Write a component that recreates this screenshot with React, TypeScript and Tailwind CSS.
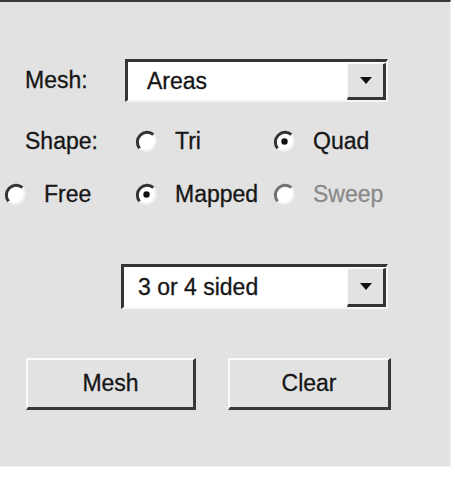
import React from "react";

const font = { fontFamily: '"Liberation Sans", Arial, sans-serif' };

function Radio({ checked, disabled }: { checked?: boolean; disabled?: boolean }) {
  return (
    <svg width="23" height="23" viewBox="0 0 23 23" className="shrink-0">
      <circle cx="11.5" cy="11.5" r="9.8" fill="#ffffff" />
      <path d="M 4.6 18.4 A 9.8 9.8 0 0 1 18.4 4.6" fill="none" stroke={disabled ? "#707070" : "#333333"} strokeWidth="3" />
      <path d="M 18.4 4.6 A 9.8 9.8 0 0 1 4.6 18.4" fill="none" stroke="#f2f2f2" strokeWidth="2" />
      {checked && <circle cx="11.5" cy="11.5" r="3.2" fill="#111" />}
    </svg>
  );
}

function RadioItem({ label, checked, disabled, width }: { label: string; checked?: boolean; disabled?: boolean; width: string }) {
  return (
    <div className={`flex items-center gap-[17px] ${width}`}>
      <Radio checked={checked} disabled={disabled} />
      <span className={disabled ? "text-[#8a8a8a]" : "text-[#161616]"}>{label}</span>
    </div>
  );
}

function Combo({ value, className, textPad }: { value: string; className: string; textPad: string }) {
  return (
    <div className={`flex bg-white border-t-[3px] border-l-[3px] border-t-[#353535] border-l-[#353535] border-r-2 border-b-2 border-r-[#f6f6f6] border-b-[#f6f6f6] ${className}`}>
      <div className={`flex-1 flex items-center text-[#161616] ${textPad}`}>{value}</div>
      <div className="w-[39px] mt-[1px] flex items-center justify-center bg-[#e2e2e2] border-t border-l border-t-[#f8f8f8] border-l-[#f8f8f8] border-r-[3px] border-b-[3px] border-r-[#353535] border-b-[#353535]">
        <svg width="12" height="7" viewBox="0 0 12 7">
          <path d="M0 0 H12 L6 7 Z" fill="#111" />
        </svg>
      </div>
    </div>
  );
}

function Button({ label, className }: { label: string; className: string }) {
  return (
    <div className={`flex items-center justify-center h-[52px] bg-[#e2e2e2] text-[#161616] border-t-2 border-l-2 border-t-[#fbfbfb] border-l-[#fbfbfb] border-r-[3px] border-b-[3px] border-r-[#383838] border-b-[#383838] ${className}`}>
      {label}
    </div>
  );
}

export default function App() {
  return (
    <div className="w-[455px] h-[485px] bg-white" style={font}>
      <div className="w-[451px] h-[467px] bg-[#e2e2e2] border-t-[2px] border-t-[#3a3a3a] border-r border-b border-r-[#f2f2f2] border-b-[#f2f2f2] text-[23px] leading-none [-webkit-text-stroke:0.3px] flex flex-col">
        <div className="mt-[57px] flex items-center h-[43px] pl-[25px]">
          <span className="w-[100px] text-[#161616]">Mesh:</span>
          <Combo value="Areas" className="w-[263px] h-[43px]" textPad="pl-[19px]" />
        </div>
        <div className="mt-[27px] flex items-center h-[24px] pl-[25px]">
          <span className="w-[110px] text-[#161616]">Shape:</span>
          <RadioItem label="Tri" width="w-[138px]" />
          <RadioItem label="Quad" checked width="w-[120px]" />
        </div>
        <div className="mt-[29px] flex items-center h-[24px] pl-[4px]">
          <RadioItem label="Free" width="w-[131px]" />
          <RadioItem label="Mapped" checked width="w-[138px]" />
          <RadioItem label="Sweep" disabled width="w-[120px]" />
        </div>
        <div className="mt-[58px] flex pl-[121px]">
          <Combo value="3 or 4 sided" className="w-[267px] h-[45px]" textPad="pl-[14px]" />
        </div>
        <div className="mt-[49px] flex pl-[26px] gap-[32px]">
          <Button label="Mesh" className="w-[170px]" />
          <Button label="Clear" className="w-[163px]" />
        </div>
      </div>
    </div>
  );
}
